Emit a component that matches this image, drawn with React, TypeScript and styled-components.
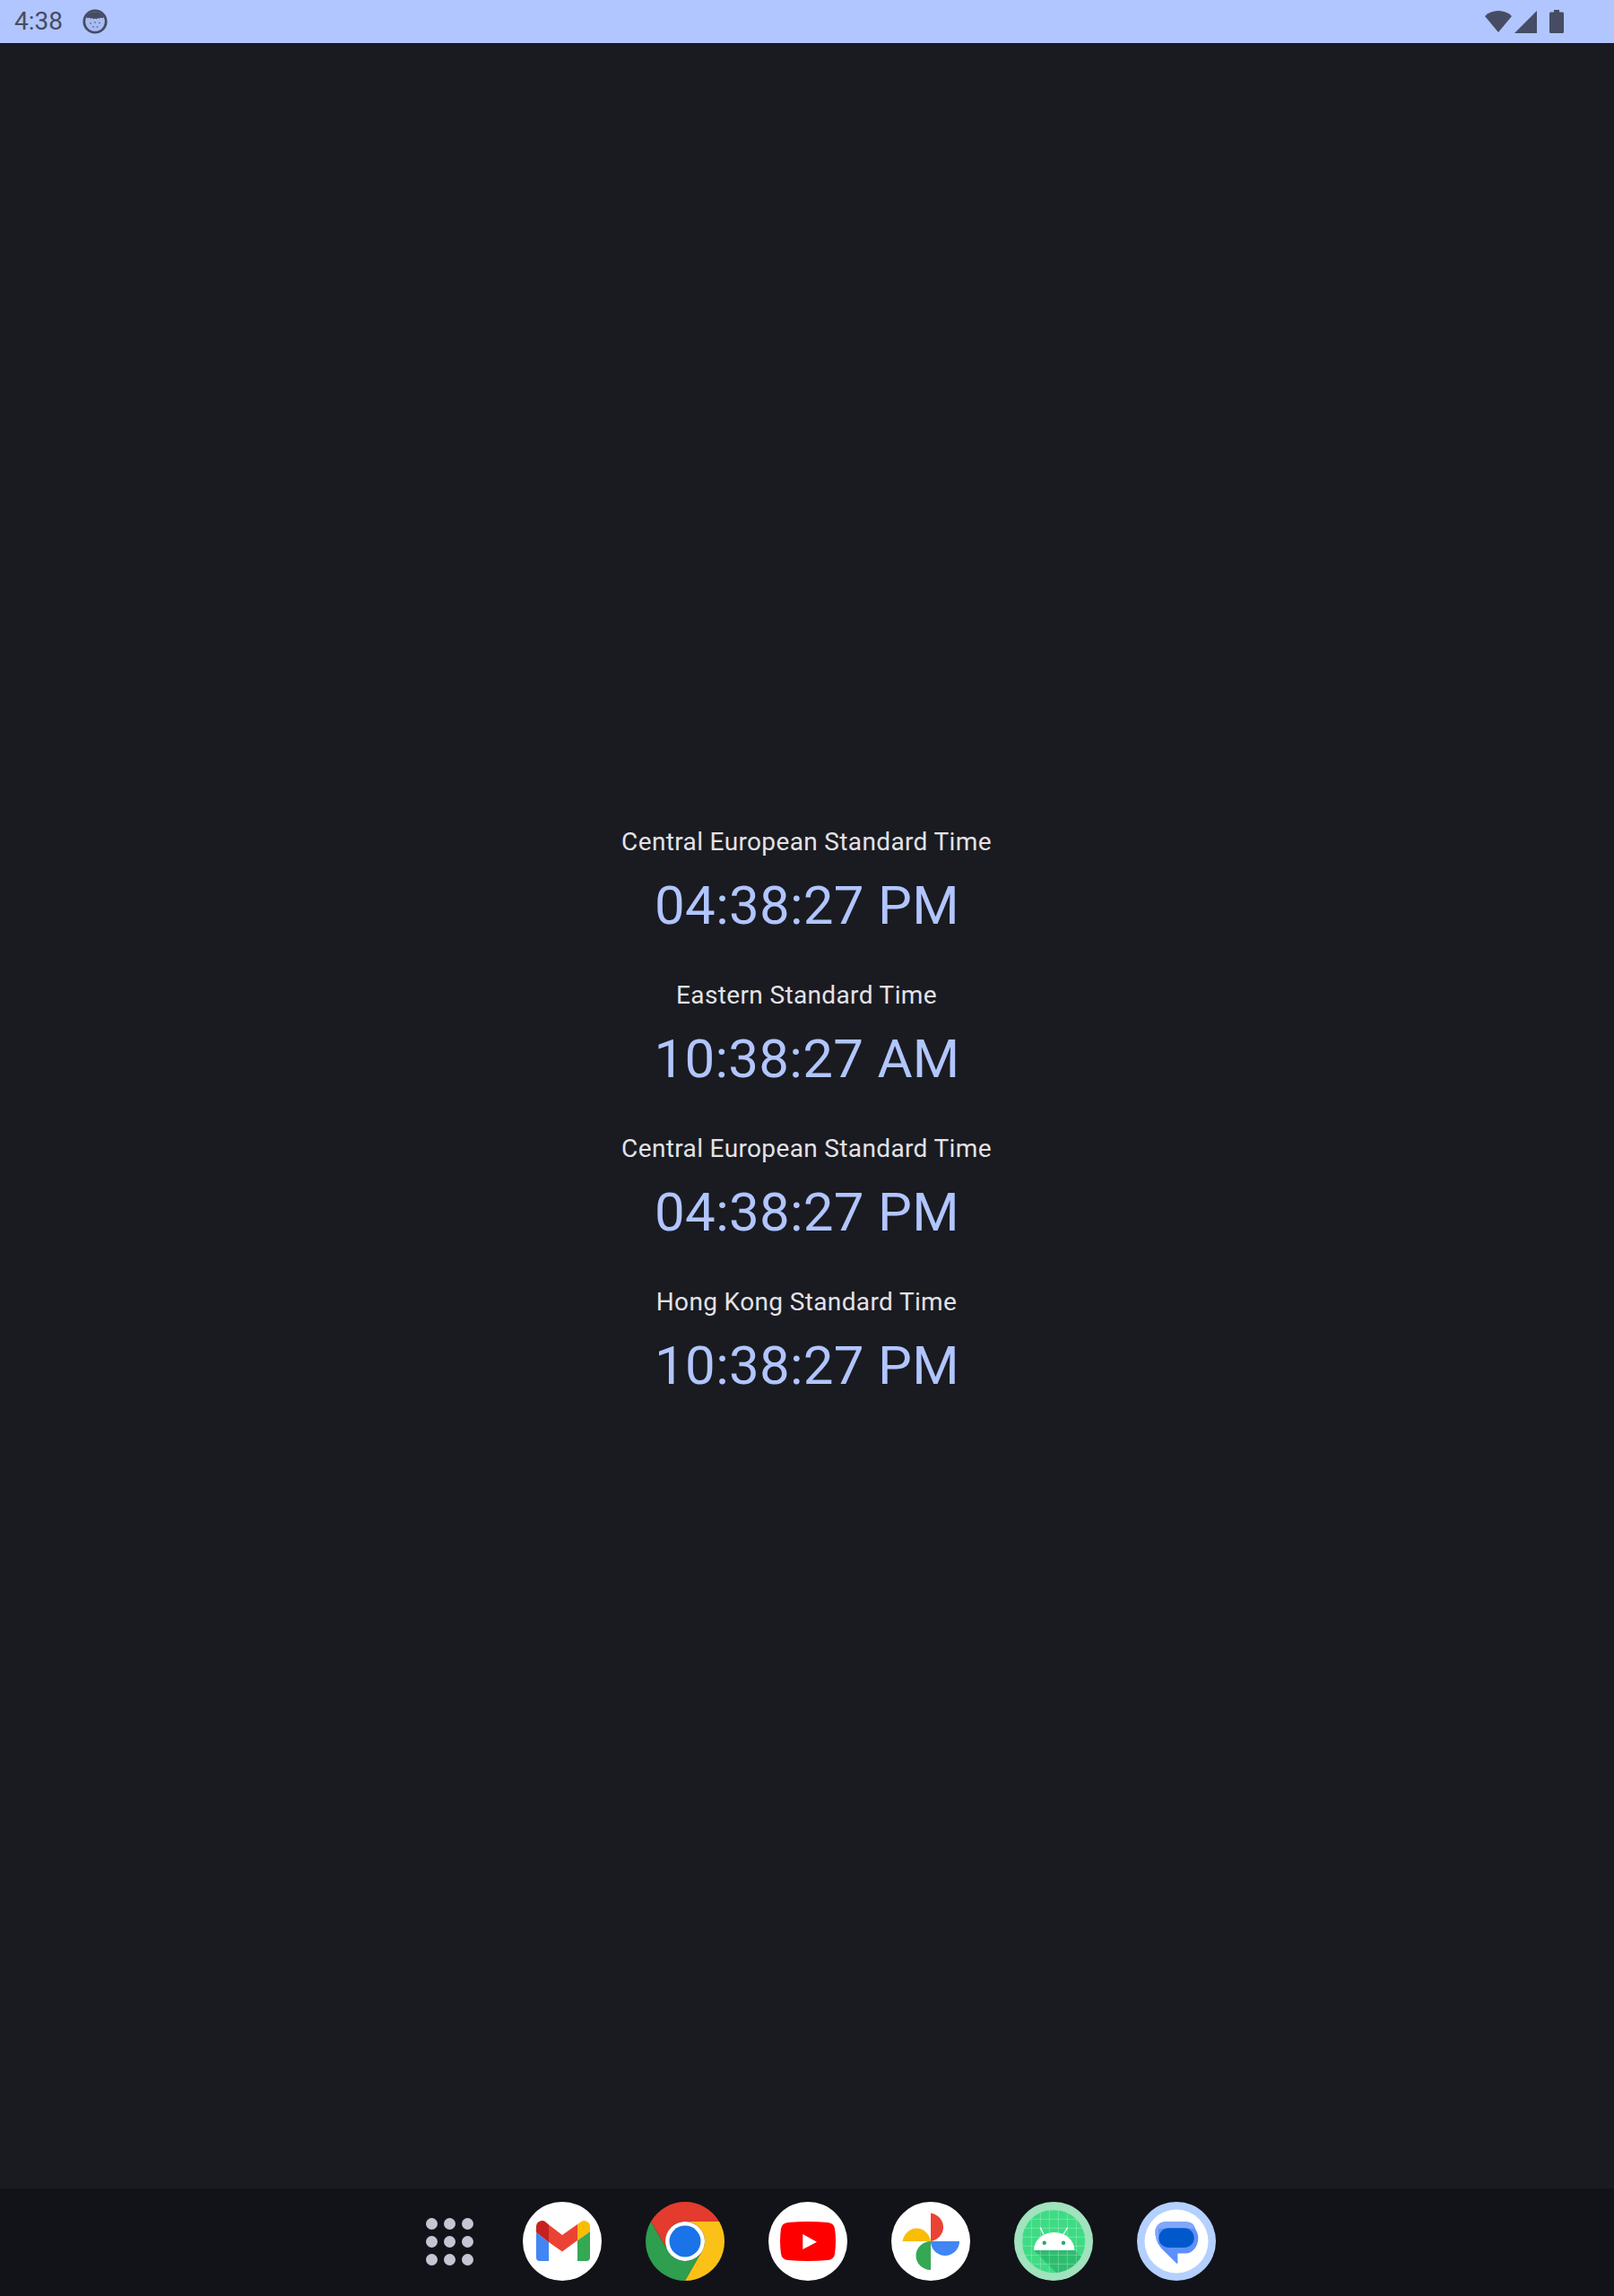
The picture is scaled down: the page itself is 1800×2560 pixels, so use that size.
import React from "react";
import styled, { createGlobalStyle } from "styled-components";

const Global = createGlobalStyle`
  html, body { margin: 0; padding: 0; background: #1a1b20; }
  * { box-sizing: border-box; }
`;

const Screen = styled.div`
  width: 1800px;
  height: 2560px;
  display: flex;
  flex-direction: column;
  overflow: hidden;
  background: #1a1b20;
  font-family: Roboto, "Liberation Sans", sans-serif;
`;

const StatusBar = styled.header`
  height: 48px;
  flex: none;
  display: flex;
  align-items: center;
  justify-content: space-between;
  padding: 0 56px 0 16px;
  background: #b1c5ff;
  color: #454c63;
`;

const StatusLeft = styled.div`
  display: flex;
  align-items: center;
  gap: 22px;
`;

const StatusTime = styled.span`
  font-size: 28px;
  line-height: 48px;
`;

const StatusIcons = styled.div`
  display: flex;
  align-items: center;
  gap: 3px;
`;

const BatteryIcon = styled.svg`
  margin-left: 11px;
`;

const Clocks = styled.main`
  flex: 1;
  display: flex;
  flex-direction: column;
  align-items: center;
  justify-content: center;
`;

const Clock = styled.section`
  height: 171px;
  display: flex;
  flex-direction: column;
  align-items: center;
  padding-top: 17px;
`;

const ZoneName = styled.div`
  font-size: 28px;
  line-height: 40px;
  letter-spacing: 0.36px;
  margin-right: 1px;
  color: #e3e2e9;
`;

const ZoneTime = styled.div`
  margin-top: 11px;
  font-size: 60px;
  line-height: 80px;
  letter-spacing: 0.3px;
  color: #b1c5ff;
`;

const Dock = styled.nav`
  height: 120px;
  flex: none;
  display: flex;
  align-items: flex-start;
  gap: 49px;
  padding: 15px 0 0 475px;
  background: #111318;
`;

const DockIcon = styled.svg`
  width: 88px;
  height: 88px;
  display: block;
  flex: none;
`;

const AppsGrid = styled.div`
  width: 59px;
  height: 88px;
  display: grid;
  grid-template-columns: repeat(3, 13px);
  grid-auto-rows: 13px;
  gap: 7px;
  align-content: center;
  justify-content: start;
`;

const AppsDot = styled.span`
  border-radius: 50%;
  background: #c5c6d3;
`;

const zones = [
  ["Central European Standard Time", "04:38:27 PM"],
  ["Eastern Standard Time", "10:38:27 AM"],
  ["Central European Standard Time", "04:38:27 PM"],
  ["Hong Kong Standard Time", "10:38:27 PM"],
];

const Gmail = () => (
  <DockIcon viewBox="0 0 88 88">
    <circle cx="44" cy="44" r="44" fill="#fff" />
    <path d="M15 34 L29 45 V66 H19 a4 4 0 0 1 -4 -4 Z" fill="#4285f4" />
    <path d="M61 43 L75 33 V62 a4 4 0 0 1 -4 4 H61 Z" fill="#34a853" />
    <path d="M15 27.500 a6.500 6.500 0 0 1 10.500 -5 L29 25.500 V45 L15 34 Z" fill="#c5221f" />
    <path d="M29 25.500 L44 37 L61 25 V43 L44 55.500 L29 45 Z" fill="#ea4335" />
    <path d="M61 25 L64.500 22.500 a6.500 6.500 0 0 1 10.500 5 V33 L61 43 Z" fill="#fbbc04" />
  </DockIcon>
);

const Chrome = () => (
  <DockIcon viewBox="0 0 88 88">
    <path d="M44 22 H82.100 A44 44 0 0 0 5.900 22 L25 55 A22 22 0 0 1 44 22 Z" fill="#e33b2e" />
    <path d="M5.900 22 A44 44 0 0 0 44 88 L63 55 A22 22 0 0 1 25 55 Z" fill="#2e9e4f" />
    <path d="M82.100 22 H44 A22 22 0 0 1 63 55 L44 88 A44 44 0 0 0 82.100 22 Z" fill="#fcc117" />
    <circle cx="44" cy="44" r="22" fill="#fff" />
    <circle cx="44" cy="44" r="17.500" fill="#1a73e8" />
  </DockIcon>
);

const YouTube = () => (
  <DockIcon viewBox="0 0 88 88">
    <circle cx="44" cy="44" r="44" fill="#fff" />
    <path d="M22 23 Q44 21 66 23 Q73 23.500 74 30 Q76 44 74 58 Q73 64.500 66 65 Q44 67 22 65 Q15 64.500 14 58 Q12 44 14 30 Q15 23.500 22 23 Z" fill="#f00" />
    <path d="M38.300 36 L54 44.700 L38.300 53 Z" fill="#fff" />
  </DockIcon>
);

const Photos = () => (
  <DockIcon viewBox="0 0 88 88">
    <circle cx="44" cy="44" r="44" fill="#fff" />
    <path d="M44 12.500 A17 16 0 0 1 44 44 Z" fill="#ea4335" />
    <path d="M12.500 44 A16 17.500 0 0 1 44 44 Z" fill="#fbbc04" />
    <path d="M44 44 A16.500 16 0 0 0 44 76 Z" fill="#34a853" />
    <path d="M44 44 H76 A16 16 0 0 1 44 44 Z" fill="#4285f4" />
  </DockIcon>
);

const gridLines = [9.3, 19.3, 29.3, 39.3, 49.3, 59.3, 69.3, 79.3];

const AndroidStudio = () => (
  <DockIcon viewBox="0 0 88 88">
    <defs>
      <clipPath id="androidDisc">
        <circle cx="44" cy="44" r="35.300" />
      </clipPath>
    </defs>
    <circle cx="44" cy="44" r="44" fill="#a0e3bd" />
    <circle cx="44" cy="44" r="35.300" fill="#3ddc84" />
    <g clipPath="url(#androidDisc)">
      <path d="M22 54 H67.300 L82 68.300 L60 92 Z" fill="#1e9e5a" fillOpacity="0.5" />
      {gridLines.map((p) => (
        <g key={p} stroke="#fff" strokeOpacity="0.38" strokeWidth="0.7">
          <line x1={p} y1="0" x2={p} y2="88" />
          <line x1="0" y1={p} x2="88" y2={p} />
        </g>
      ))}
    </g>
    <g stroke="#fff" strokeWidth="1.300" strokeLinecap="round">
      <line x1="32.700" y1="35.700" x2="29.300" y2="29" />
      <line x1="55.300" y1="35.700" x2="59.300" y2="29" />
    </g>
    <path d="M22 54 A22.650 20 0 0 1 67.300 54 Z" fill="#fff" />
    <circle cx="33.700" cy="45.700" r="2.200" fill="#2ea56b" />
    <circle cx="55" cy="45.700" r="2.200" fill="#2ea56b" />
  </DockIcon>
);

const Messages = () => (
  <DockIcon viewBox="0 0 88 88">
    <circle cx="44" cy="44" r="44" fill="#b4d0ff" />
    <circle cx="44" cy="44" r="35.500" fill="#fff" />
    <path d="M32 22.300 H54 C60 22.300 64 25 65 30 C67 33 68.300 37 68.300 40 C68.300 50 62 57.500 54 57.500 H45.400 V68 Q45.400 69.500 44 68.500 L28 52.700 C23 47 20.400 40 20.400 33.500 C20.400 27 25.500 22.300 32 22.300 Z" fill="#5e90fb" />
    <path d="M32 22.300 H54 C59 22.300 63 25 64.500 29.700 H24 V48 C22 44 20.400 39 20.400 33.500 C20.400 27 25.500 22.300 32 22.300 Z" fill="#80a7fc" />
    <rect x="24.400" y="29.300" width="39.300" height="21.700" rx="10.800" fill="#0059cb" />
  </DockIcon>
);

export default function App() {
  return (
    <Screen>
      <Global />
      <StatusBar>
        <StatusLeft>
          <StatusTime>4:38</StatusTime>
          <svg width="28" height="28" viewBox="0 0 28 28">
            <circle cx="14" cy="14" r="12.200" fill="#a9bcf2" stroke="#454c63" strokeWidth="2.800" />
            <path d="M4 9 A11.500 11.500 0 0 1 24 9 Q22.500 11 20.500 9.500 Q19 11.500 17.500 10 Q16 12 14 10.500 Q12 12 10.500 10 Q9 11.500 7.500 9.500 Q5.500 11 4 9 Z" fill="#454c63" />
            <g fill="#454c63">
              <circle cx="9" cy="16" r="0.800" />
              <circle cx="14" cy="15" r="0.800" />
              <circle cx="19" cy="15.500" r="0.800" />
              <circle cx="12" cy="20" r="0.800" />
              <circle cx="16.500" cy="20" r="0.800" />
            </g>
          </svg>
        </StatusLeft>
        <StatusIcons>
          <svg width="30" height="26" viewBox="0 0 30 26">
            <path d="M0 7 A22 22 0 0 1 30 7 L15 25 Z" fill="#454c63" />
          </svg>
          <svg width="25" height="25" viewBox="0 0 25 25">
            <path d="M25 0 V25 H0 Z" fill="#454c63" />
          </svg>
          <BatteryIcon width="16" height="26" viewBox="0 0 16 26">
            <path d="M5 0 H11 V2.500 H14.500 A1.500 1.500 0 0 1 16 4 V24.500 A1.500 1.500 0 0 1 14.500 26 H1.500 A1.500 1.500 0 0 1 0 24.500 V4 A1.500 1.500 0 0 1 1.500 2.500 H5 Z" fill="#454c63" />
          </BatteryIcon>
        </StatusIcons>
      </StatusBar>
      <Clocks>
        {zones.map(([name, time], i) => (
          <Clock key={i}>
            <ZoneName>{name}</ZoneName>
            <ZoneTime>{time}</ZoneTime>
          </Clock>
        ))}
      </Clocks>
      <Dock>
        <AppsGrid>
          {Array.from({ length: 9 }, (_, i) => (
            <AppsDot key={i} />
          ))}
        </AppsGrid>
        <Gmail />
        <Chrome />
        <YouTube />
        <Photos />
        <AndroidStudio />
        <Messages />
      </Dock>
    </Screen>
  );
}
